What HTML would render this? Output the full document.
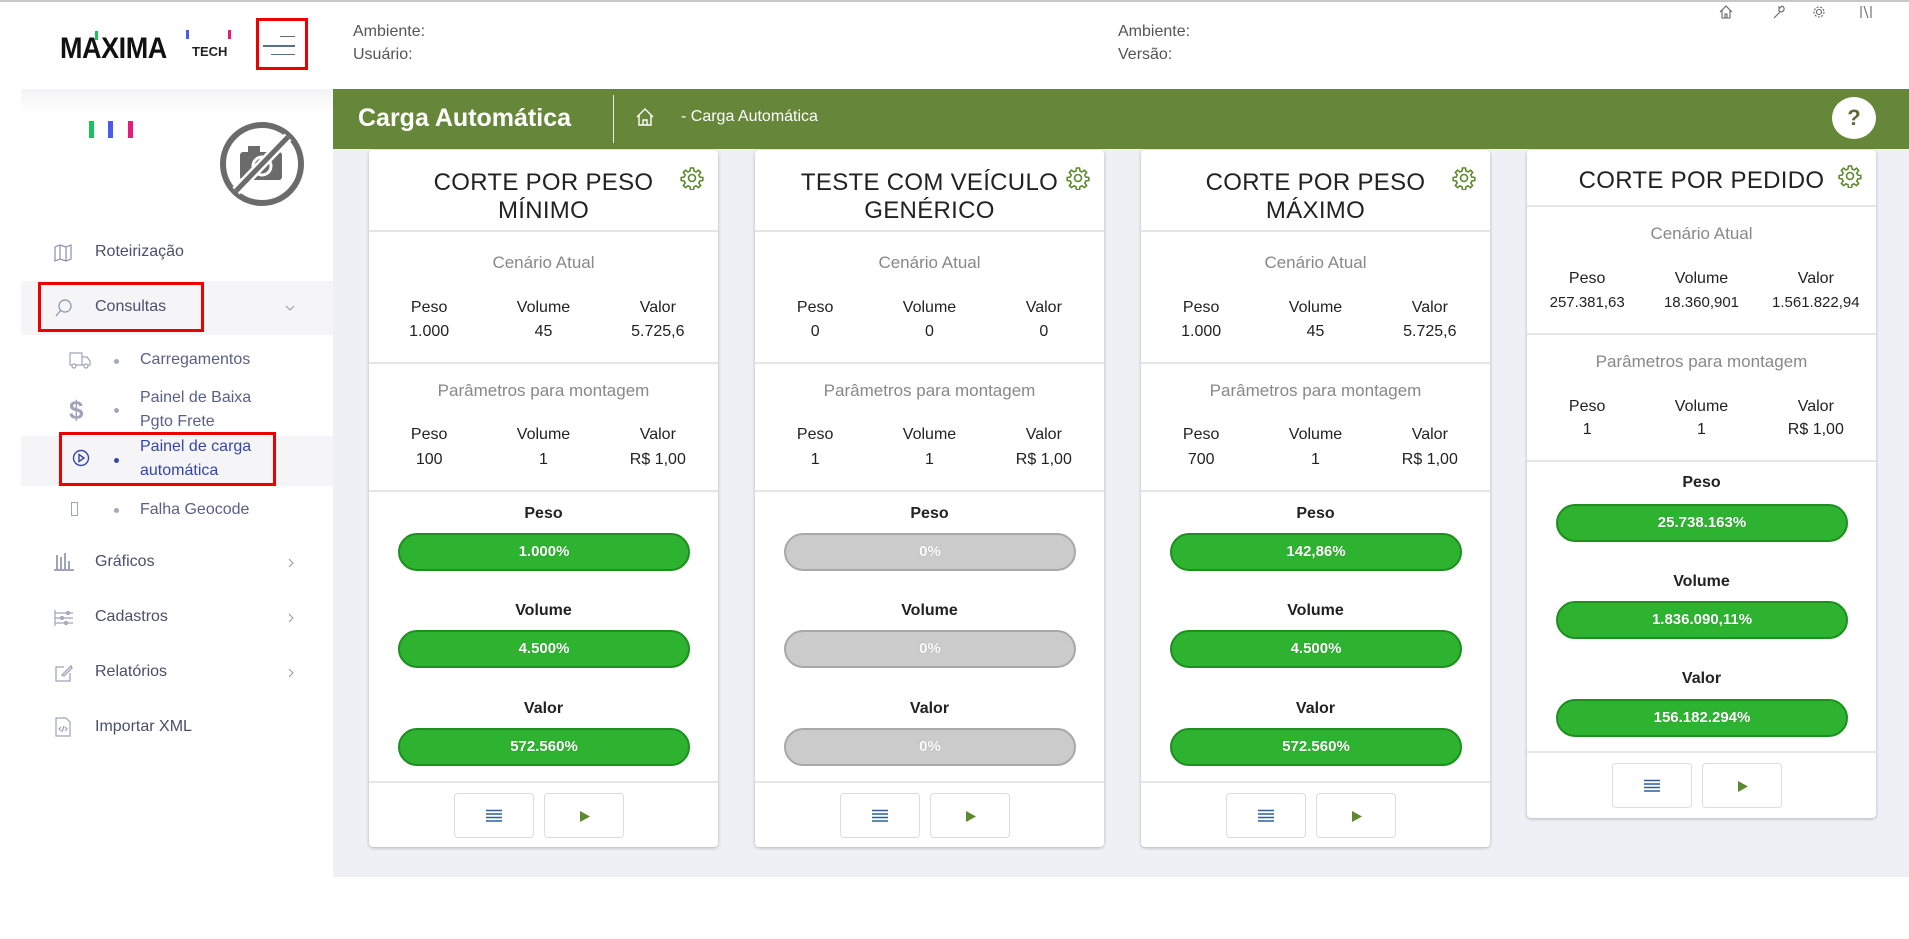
<!DOCTYPE html>
<html><head><meta charset="utf-8">
<style>
*{box-sizing:border-box;margin:0;padding:0}
body{width:1909px;height:939px;position:relative;background:#fff;font-family:"Liberation Sans",sans-serif;overflow:hidden;color:#222}
.abs{position:absolute}
.topline{left:0;top:0;width:1909px;height:2px;background:#c8c8c8}
.hdr{color:#555;font-size:16px}
.side{left:21px;top:89px;width:312px;height:850px;background:#fff}
.sideshadow{left:21px;top:89px;width:312px;height:24px;background:linear-gradient(#f3f3f5,#fff)}
.main{left:333px;top:89px;width:1576px;height:788px;background:#eef0f5}
.green{left:333px;top:89px;width:1576px;height:60px;background:#66873a}
.nav{font-size:16px;color:#4a4f6a;white-space:nowrap}
.navsub{font-size:16px;color:#5a6085;white-space:nowrap;line-height:24px}
.dot{width:5px;height:5px;border-radius:50%;background:#a5a8b8}
.card{background:#fff;border-radius:4px;box-shadow:0 1px 3px rgba(0,0,0,.25);width:349px}
.card div{position:absolute}
.t{left:0;width:349px;text-align:center;font-size:24px;color:#222;line-height:28px;letter-spacing:.3px}
.hr{left:0;width:349px;height:2px;background:#e6e6e9}
.sec{left:0;width:349px;text-align:center;font-size:17px;color:#888;line-height:20px}
.row{left:3px;width:343px;display:flex;font-size:16px;line-height:20px;color:#222}
.row span{flex:1;text-align:center}
.lab{left:0;width:349px;text-align:center;font-size:16px;font-weight:bold;color:#222;line-height:20px}
.bar{left:29px;width:292px;height:38px;border-radius:19px;background:#2db32f;border:2px solid #1d8f1f;color:#fff;text-align:center;font-size:15px;font-weight:bold;line-height:34px;text-shadow:0 0 1px rgba(0,0,0,.3)}
.bar.g{background:#cbcbcb;border-color:#a8a8a8}
.btn{width:80px;height:45px;border:1px solid #dcdcdf;border-radius:4px;background:#fff}
.gear{position:absolute;right:14px;top:16px;width:24px;height:24px}
</style></head><body>
<div class="abs topline"></div>
<!-- header -->
<div class="abs" style="left:60px;top:34px;font-size:30px;font-weight:bold;color:#111;letter-spacing:-0.5px;line-height:30px;transform:scaleX(0.9);transform-origin:left">MAXIMA</div>
<div class="abs" style="left:192px;top:44px;font-size:13px;font-weight:bold;color:#222">TECH</div>
<div class="abs" style="left:95px;top:31px;width:3px;height:9px;background:#19c35a"></div>
<div class="abs" style="left:186px;top:30px;width:3px;height:9px;background:#4b5bf0"></div>
<div class="abs" style="left:228px;top:30px;width:3px;height:9px;background:#e6197c"></div>
<div class="abs" style="left:256px;top:18px;width:52px;height:52px;border:3px solid #ee0000"></div>
<div class="abs" style="left:280px;top:36px;width:15px;height:1px;background:#5a6f8a"></div>
<div class="abs" style="left:263px;top:45px;width:32px;height:2px;background:#5a6f8a"></div>
<div class="abs" style="left:271px;top:54px;width:24px;height:1px;background:#5a6f8a"></div>
<div class="abs hdr" style="left:353px;top:23px">Ambiente:</div>
<div class="abs hdr" style="left:353px;top:46px">Usuário:</div>
<div class="abs hdr" style="left:1118px;top:23px">Ambiente:</div>
<div class="abs hdr" style="left:1118px;top:46px">Versão:</div>
<svg class="abs" style="left:1718px;top:4px" width="160" height="16" viewBox="0 0 160 16" fill="none" stroke="#666" stroke-width="1.1">
<path d="M2 8 L8 2 L14 8 M4 6 V14 H12 V6 M7 14 V10 H9 V14"/>
<path d="M56 14 L62 8 M61 7 a3 3 0 1 0 3 -5 l-2 2 -1 -1 z"/>
<circle cx="101" cy="8" r="2.5"/><circle cx="101" cy="8" r="5" stroke-dasharray="2 1.5"/>
<path d="M143 2 V14 M146 2 L150 14 M153 2 V14"/>
</svg>
<!-- sidebar -->
<div class="abs side"></div>
<div class="abs sideshadow"></div>
<div class="abs" style="left:89px;top:121px;width:5px;height:17px;background:#19c35a"></div>
<div class="abs" style="left:108px;top:121px;width:5px;height:17px;background:#4b5bf0"></div>
<div class="abs" style="left:128px;top:121px;width:5px;height:17px;background:#e6197c"></div>
<svg class="abs" style="left:218px;top:120px" width="88" height="88" viewBox="0 0 88 88">
<circle cx="44" cy="44" r="39" fill="none" stroke="#6b6b6b" stroke-width="6"/>
<rect x="22" y="32" width="42" height="28" rx="3" fill="#6b6b6b"/><rect x="30" y="26" width="12" height="8" fill="#6b6b6b"/>
<circle cx="44" cy="46" r="9" fill="none" stroke="#fff" stroke-width="3"/>
<line x1="70" y1="17" x2="18" y2="71" stroke="#fff" stroke-width="10"/>
<line x1="70" y1="17" x2="18" y2="71" stroke="#6b6b6b" stroke-width="5"/>
</svg>
<svg class="abs" style="left:54px;top:244px" width="18" height="18" viewBox="0 0 18 18" fill="none" stroke="#8a8fa8" stroke-width="1.2"><path d="M1 3 L6 1 L12 3 L17 1 V15 L12 17 L6 15 L1 17 Z M6 1 V15 M12 3 V17"/></svg>
<div class="abs nav" style="left:95px;top:243px">Roteirização</div>
<div class="abs" style="left:21px;top:281px;width:312px;height:54px;background:#f5f5f8"></div>
<div class="abs" style="left:38px;top:282px;width:166px;height:50px;border:3px solid #ee0000"></div>
<svg class="abs" style="left:54px;top:298px" width="20" height="20" viewBox="0 0 20 20" fill="none" stroke="#8a8fa8" stroke-width="1.2"><circle cx="11" cy="8" r="6"/><path d="M7 12 L2 18"/></svg>
<div class="abs nav" style="left:95px;top:298px">Consultas</div>
<svg class="abs" style="left:285px;top:304px" width="10" height="8"><path d="M1 2 L5 6 L9 2" fill="none" stroke="#999"/></svg>
<svg class="abs" style="left:69px;top:351px" width="22" height="18" viewBox="0 0 22 18" fill="none" stroke="#a0a4ba" stroke-width="1.2"><path d="M1 2 H13 V14 H1 Z M13 6 H18 L21 10 V14 H13"/><circle cx="5" cy="15" r="2" fill="#fff"/><circle cx="17" cy="15" r="2" fill="#fff"/></svg>
<div class="abs dot" style="left:114px;top:359px"></div>
<div class="abs navsub" style="left:140px;top:348px">Carregamentos</div>
<div class="abs" style="left:69px;top:395px;font-size:26px;font-weight:bold;color:#a0a4ba">$</div>
<div class="abs dot" style="left:114px;top:408px"></div>
<div class="abs navsub" style="left:140px;top:386px">Painel de Baixa<br>Pgto Frete</div>
<div class="abs" style="left:21px;top:436px;width:312px;height:50px;background:#f5f5f8"></div>
<div class="abs" style="left:59px;top:432px;width:217px;height:54px;border:3px solid #ee0000"></div>
<svg class="abs" style="left:72px;top:449px" width="18" height="18" viewBox="0 0 18 18" fill="none" stroke="#3446a8" stroke-width="1.4"><circle cx="9" cy="9" r="7.5"/><path d="M7 5.5 L12 9 L7 12.5 Z"/></svg>
<div class="abs dot" style="left:114px;top:458px;background:#3446a8"></div>
<div class="abs navsub" style="left:140px;top:435px;color:#3446a8">Painel de carga<br>automática</div>
<div class="abs" style="left:71px;top:502px;width:7px;height:14px;border:1px solid #a0a4ba"></div>
<div class="abs dot" style="left:114px;top:508px"></div>
<div class="abs navsub" style="left:140px;top:498px">Falha Geocode</div>
<svg class="abs" style="left:54px;top:553px" width="20" height="18" viewBox="0 0 20 18" fill="#a0a4ba"><rect x="0" y="16" width="20" height="2"/><rect x="2" y="2" width="2" height="14"/><rect x="6" y="4" width="2" height="12"/><rect x="10" y="0" width="2" height="16"/><rect x="14" y="8" width="2" height="8"/></svg>
<div class="abs nav" style="left:95px;top:553px">Gráficos</div>
<svg class="abs" style="left:287px;top:558px" width="8" height="10"><path d="M2 1 L6 5 L2 9" fill="none" stroke="#999"/></svg>
<svg class="abs" style="left:54px;top:609px" width="20" height="18" viewBox="0 0 20 18" fill="none" stroke="#a0a4ba" stroke-width="1.2"><path d="M1 1 V17 M1 4 H19 M1 9 H19 M1 14 H19"/><circle cx="14" cy="4" r="1.5"/><circle cx="8" cy="9" r="1.5"/><circle cx="12" cy="14" r="1.5"/></svg>
<div class="abs nav" style="left:95px;top:608px">Cadastros</div>
<svg class="abs" style="left:287px;top:613px" width="8" height="10"><path d="M2 1 L6 5 L2 9" fill="none" stroke="#999"/></svg>
<svg class="abs" style="left:54px;top:663px" width="20" height="20" viewBox="0 0 20 20" fill="none" stroke="#a0a4ba" stroke-width="1.3"><path d="M10 4 H2 V18 H16 V10 M8 12 L17 3 L18 5 L10 13 Z"/></svg>
<div class="abs nav" style="left:95px;top:663px">Relatórios</div>
<svg class="abs" style="left:287px;top:668px" width="8" height="10"><path d="M2 1 L6 5 L2 9" fill="none" stroke="#999"/></svg>
<svg class="abs" style="left:55px;top:717px" width="16" height="20" viewBox="0 0 16 20" fill="none" stroke="#a0a4ba" stroke-width="1.2"><path d="M1 1 H11 L15 5 V19 H1 Z M6 10 L4 12 L6 14 M10 10 L12 12 L10 14 M9 9 L7 15"/></svg>
<div class="abs nav" style="left:95px;top:718px">Importar XML</div>
<!-- main -->
<div class="abs main"></div>
<div class="abs green"></div>
<div class="abs" style="left:358px;top:104px;font-size:25px;font-weight:bold;color:#fff">Carga Automática</div>
<div class="abs" style="left:613px;top:95px;width:1px;height:48px;background:#e8eedd"></div>
<svg class="abs" style="left:636px;top:108px" width="18" height="18" viewBox="0 0 18 18" fill="none" stroke="#fff" stroke-width="1.4"><path d="M1 9 L9 1 L17 9 M3 7 V17 H15 V7 M7 17 V12 H11 V17"/></svg>
<div class="abs" style="left:681px;top:108px;font-size:16px;color:#fff">- Carga Automática</div>
<div class="abs" style="left:1832px;top:97px;width:44px;height:42px;border-radius:50%;background:#fff;text-align:center;font-weight:bold;font-size:22px;line-height:42px;color:#5a6b35">?</div>

<div class="abs card" style="left:369px;top:150px;height:697px">
 <div class="t" style="top:19px">CORTE POR PESO<br>MÍNIMO</div>
 <svg class="gear" viewBox="0 0 24 24" fill="none" stroke="#5d8a2e" stroke-width="1.6"><circle cx="12" cy="12" r="3.5"/><path d="M10.5 2h3l.5 3 2 1 2.5-1.8 2.1 2.1L18.8 9l1 2 3 .5v3l-3 .5-1 2 1.8 2.5-2.1 2.1L16 19.8l-2 1-.5 3h-3l-.5-3-2-1-2.5 1.8-2.1-2.1L5.2 17l-1-2-3-.5v-3l3-.5 1-2L3.4 6.3l2.1-2.1L8 6l2-1z"/></svg>
 <div class="hr" style="top:80px"></div>
 <div class="sec" style="top:103px">Cenário Atual</div>
 <div class="row" style="top:148px"><span>Peso</span><span>Volume</span><span>Valor</span></div>
 <div class="row" style="top:172px"><span>1.000</span><span>45</span><span>5.725,6</span></div>
 <div class="hr" style="top:212px"></div>
 <div class="sec" style="top:231px">Parâmetros para montagem</div>
 <div class="row" style="top:275px"><span>Peso</span><span>Volume</span><span>Valor</span></div>
 <div class="row" style="top:300px"><span>100</span><span>1</span><span>R$ 1,00</span></div>
 <div class="hr" style="top:340px"></div>
 <div class="lab" style="top:354px">Peso</div>
 <div class="bar" style="top:383px">1.000%</div>
 <div class="lab" style="top:451px">Volume</div>
 <div class="bar" style="top:480px">4.500%</div>
 <div class="lab" style="top:549px">Valor</div>
 <div class="bar" style="top:578px">572.560%</div>
 <div class="hr" style="top:631px"></div>
 <div class="btn" style="left:85px;top:643px"><svg style="position:absolute;left:31px;top:15px" width="16" height="14"><path d="M0 1.5H16M0 5H16M0 8.5H16M0 12H16" stroke="#2d5f9a" stroke-width="1.6"/></svg></div>
 <div class="btn" style="left:175px;top:643px"><svg style="position:absolute;left:34px;top:16px" width="12" height="13"><path d="M1 1 L11 6.5 L1 12Z" fill="#5d8a2e"/></svg></div>
</div>

<div class="abs card" style="left:755px;top:150px;height:697px">
 <div class="t" style="top:19px">TESTE COM VEÍCULO<br>GENÉRICO</div>
 <svg class="gear" viewBox="0 0 24 24" fill="none" stroke="#5d8a2e" stroke-width="1.6"><circle cx="12" cy="12" r="3.5"/><path d="M10.5 2h3l.5 3 2 1 2.5-1.8 2.1 2.1L18.8 9l1 2 3 .5v3l-3 .5-1 2 1.8 2.5-2.1 2.1L16 19.8l-2 1-.5 3h-3l-.5-3-2-1-2.5 1.8-2.1-2.1L5.2 17l-1-2-3-.5v-3l3-.5 1-2L3.4 6.3l2.1-2.1L8 6l2-1z"/></svg>
 <div class="hr" style="top:80px"></div>
 <div class="sec" style="top:103px">Cenário Atual</div>
 <div class="row" style="top:148px"><span>Peso</span><span>Volume</span><span>Valor</span></div>
 <div class="row" style="top:172px"><span>0</span><span>0</span><span>0</span></div>
 <div class="hr" style="top:212px"></div>
 <div class="sec" style="top:231px">Parâmetros para montagem</div>
 <div class="row" style="top:275px"><span>Peso</span><span>Volume</span><span>Valor</span></div>
 <div class="row" style="top:300px"><span>1</span><span>1</span><span>R$ 1,00</span></div>
 <div class="hr" style="top:340px"></div>
 <div class="lab" style="top:354px">Peso</div>
 <div class="bar g" style="top:383px">0%</div>
 <div class="lab" style="top:451px">Volume</div>
 <div class="bar g" style="top:480px">0%</div>
 <div class="lab" style="top:549px">Valor</div>
 <div class="bar g" style="top:578px">0%</div>
 <div class="hr" style="top:631px"></div>
 <div class="btn" style="left:85px;top:643px"><svg style="position:absolute;left:31px;top:15px" width="16" height="14"><path d="M0 1.5H16M0 5H16M0 8.5H16M0 12H16" stroke="#2d5f9a" stroke-width="1.6"/></svg></div>
 <div class="btn" style="left:175px;top:643px"><svg style="position:absolute;left:34px;top:16px" width="12" height="13"><path d="M1 1 L11 6.5 L1 12Z" fill="#5d8a2e"/></svg></div>
</div>

<div class="abs card" style="left:1141px;top:150px;height:697px">
 <div class="t" style="top:19px">CORTE POR PESO<br>MÁXIMO</div>
 <svg class="gear" viewBox="0 0 24 24" fill="none" stroke="#5d8a2e" stroke-width="1.6"><circle cx="12" cy="12" r="3.5"/><path d="M10.5 2h3l.5 3 2 1 2.5-1.8 2.1 2.1L18.8 9l1 2 3 .5v3l-3 .5-1 2 1.8 2.5-2.1 2.1L16 19.8l-2 1-.5 3h-3l-.5-3-2-1-2.5 1.8-2.1-2.1L5.2 17l-1-2-3-.5v-3l3-.5 1-2L3.4 6.3l2.1-2.1L8 6l2-1z"/></svg>
 <div class="hr" style="top:80px"></div>
 <div class="sec" style="top:103px">Cenário Atual</div>
 <div class="row" style="top:148px"><span>Peso</span><span>Volume</span><span>Valor</span></div>
 <div class="row" style="top:172px"><span>1.000</span><span>45</span><span>5.725,6</span></div>
 <div class="hr" style="top:212px"></div>
 <div class="sec" style="top:231px">Parâmetros para montagem</div>
 <div class="row" style="top:275px"><span>Peso</span><span>Volume</span><span>Valor</span></div>
 <div class="row" style="top:300px"><span>700</span><span>1</span><span>R$ 1,00</span></div>
 <div class="hr" style="top:340px"></div>
 <div class="lab" style="top:354px">Peso</div>
 <div class="bar" style="top:383px">142,86%</div>
 <div class="lab" style="top:451px">Volume</div>
 <div class="bar" style="top:480px">4.500%</div>
 <div class="lab" style="top:549px">Valor</div>
 <div class="bar" style="top:578px">572.560%</div>
 <div class="hr" style="top:631px"></div>
 <div class="btn" style="left:85px;top:643px"><svg style="position:absolute;left:31px;top:15px" width="16" height="14"><path d="M0 1.5H16M0 5H16M0 8.5H16M0 12H16" stroke="#2d5f9a" stroke-width="1.6"/></svg></div>
 <div class="btn" style="left:175px;top:643px"><svg style="position:absolute;left:34px;top:16px" width="12" height="13"><path d="M1 1 L11 6.5 L1 12Z" fill="#5d8a2e"/></svg></div>
</div>

<div class="abs card" style="left:1527px;top:150px;height:668px">
 <div class="t" style="top:17px">CORTE POR PEDIDO</div>
 <svg class="gear" style="top:14px" viewBox="0 0 24 24" fill="none" stroke="#5d8a2e" stroke-width="1.6"><circle cx="12" cy="12" r="3.5"/><path d="M10.5 2h3l.5 3 2 1 2.5-1.8 2.1 2.1L18.8 9l1 2 3 .5v3l-3 .5-1 2 1.8 2.5-2.1 2.1L16 19.8l-2 1-.5 3h-3l-.5-3-2-1-2.5 1.8-2.1-2.1L5.2 17l-1-2-3-.5v-3l3-.5 1-2L3.4 6.3l2.1-2.1L8 6l2-1z"/></svg>
 <div class="hr" style="top:55px"></div>
 <div class="sec" style="top:74px">Cenário Atual</div>
 <div class="row" style="top:119px"><span>Peso</span><span>Volume</span><span>Valor</span></div>
 <div class="row" style="top:143px;font-size:15px"><span>257.381,63</span><span>18.360,901</span><span>1.561.822,94</span></div>
 <div class="hr" style="top:183px"></div>
 <div class="sec" style="top:202px">Parâmetros para montagem</div>
 <div class="row" style="top:247px"><span>Peso</span><span>Volume</span><span>Valor</span></div>
 <div class="row" style="top:270px"><span>1</span><span>1</span><span>R$ 1,00</span></div>
 <div class="hr" style="top:310px"></div>
 <div class="lab" style="top:323px">Peso</div>
 <div class="bar" style="top:354px">25.738.163%</div>
 <div class="lab" style="top:422px">Volume</div>
 <div class="bar" style="top:451px">1.836.090,11%</div>
 <div class="lab" style="top:519px">Valor</div>
 <div class="bar" style="top:549px">156.182.294%</div>
 <div class="hr" style="top:601px"></div>
 <div class="btn" style="left:85px;top:613px"><svg style="position:absolute;left:31px;top:15px" width="16" height="14"><path d="M0 1.5H16M0 5H16M0 8.5H16M0 12H16" stroke="#2d5f9a" stroke-width="1.6"/></svg></div>
 <div class="btn" style="left:175px;top:613px"><svg style="position:absolute;left:34px;top:16px" width="12" height="13"><path d="M1 1 L11 6.5 L1 12Z" fill="#5d8a2e"/></svg></div>
</div>
</body></html>
